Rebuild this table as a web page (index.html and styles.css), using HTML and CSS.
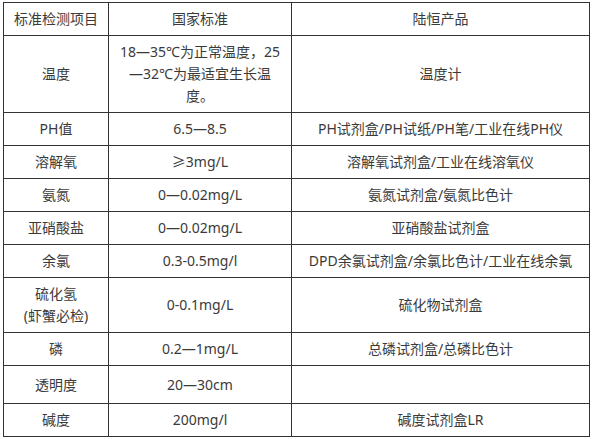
FILE: index.html
```html
<!DOCTYPE html>
<html lang="zh-CN">
<head>
<meta charset="utf-8">
<title>水质检测标准</title>
<link rel="stylesheet" href="styles.css">
</head>
<body>
<table class="spec">
  <colgroup>
    <col class="c1">
    <col class="c2">
    <col class="c3">
  </colgroup>
  <tbody>
    <tr><td>标准检测项目</td><td>国家标准</td><td>陆恒产品</td></tr>
    <tr><td>温度</td><td>18—35℃为正常温度，25<br>—32℃为最适宜生长温<br>度。</td><td>温度计</td></tr>
    <tr><td>PH值</td><td>6.5—8.5</td><td>PH试剂盒/PH试纸/PH笔/工业在线PH仪</td></tr>
    <tr><td>溶解氧</td><td>≥3mg/L</td><td>溶解氧试剂盒/工业在线溶氧仪</td></tr>
    <tr><td>氨氮</td><td>0—0.02mg/L</td><td>氨氮试剂盒/氨氮比色计</td></tr>
    <tr><td>亚硝酸盐</td><td>0—0.02mg/L</td><td>亚硝酸盐试剂盒</td></tr>
    <tr><td>余氯</td><td>0.3-0.5mg/l</td><td>DPD余氯试剂盒/余氯比色计/工业在线余氯</td></tr>
    <tr><td>硫化氢<br>(虾蟹必检)</td><td>0-0.1mg/L</td><td>硫化物试剂盒</td></tr>
    <tr><td>磷</td><td>0.2—1mg/L</td><td>总磷试剂盒/总磷比色计</td></tr>
    <tr class="tall"><td>透明度</td><td>20—30cm</td><td></td></tr>
    <tr><td>碱度</td><td>200mg/l</td><td>碱度试剂盒LR</td></tr>
  </tbody>
</table>
</body>
</html>
```
FILE: styles.css
```css
html, body {
  background: #ffffff;
}
body {
  margin: 2px 0 0 3px;
  font-family: "Noto Sans", "Noto Sans CJK SC", sans-serif;
  font-size: 14px;
  color: #3a3a3a;
}
.spec {
  border-collapse: collapse;
  table-layout: fixed;
  width: 586px;
}
.spec .c1 { width: 105px; }
.spec .c2 { width: 183px; }
.spec .c3 { width: 298px; }
.spec td {
  border: 1px solid #333333;
  padding: 5px 2px;
  line-height: 22px;
  text-align: center;
  vertical-align: middle;
  white-space: nowrap;
  overflow: hidden;
}
.spec .tall td {
  height: 27px;
}
```
